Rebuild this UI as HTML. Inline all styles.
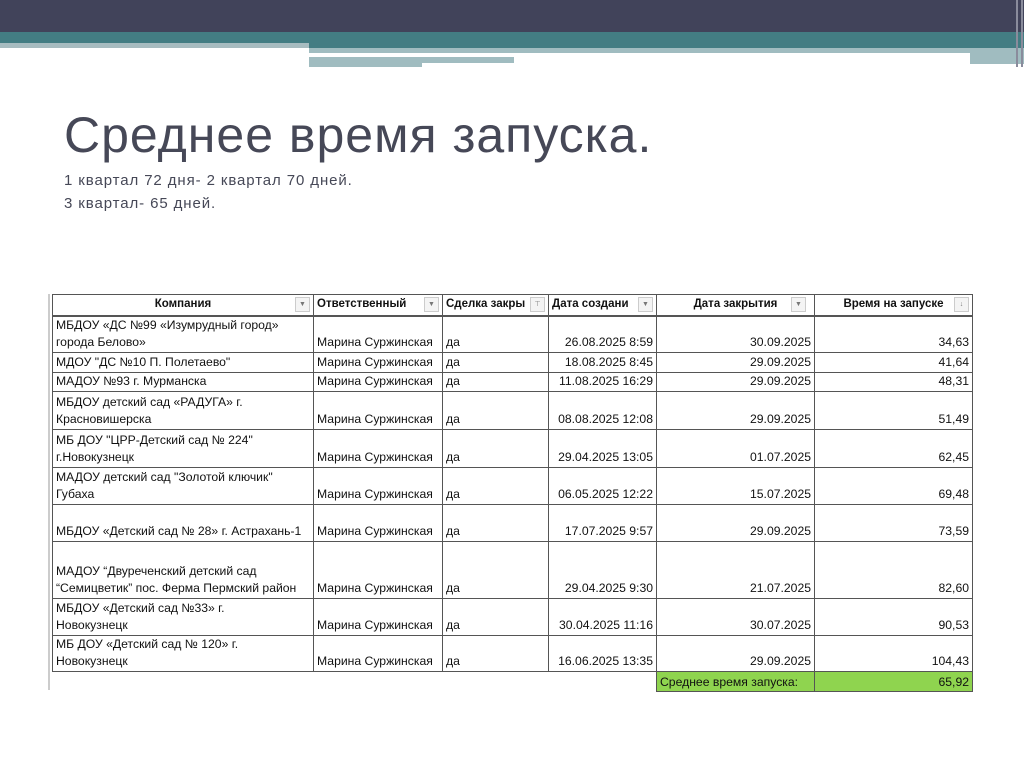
<!DOCTYPE html>
<html><head><meta charset="utf-8"><style>
body{margin:0;width:1024px;height:767px;background:#fff;position:relative;overflow:hidden;font-family:"Liberation Sans","DejaVu Sans",sans-serif}
.b{position:absolute}
h1{position:absolute;left:64px;top:106px;margin:0;font-weight:normal;font-size:50px;color:#464857;letter-spacing:1px}
.sub{position:absolute;left:64px;font-size:15px;color:#464857;letter-spacing:0.9px}
table{position:absolute;left:52px;top:294px;border-collapse:collapse;table-layout:fixed;font-size:12.2px;color:#111}
td{border:1px solid #555;padding:0 3px 1px 3px;vertical-align:bottom;line-height:17px;white-space:nowrap;overflow:hidden;box-sizing:border-box}
tr.h td{font-weight:bold;text-align:center;vertical-align:middle;border-bottom:2px solid #555;font-size:11.5px;position:relative;line-height:15px}
.r{text-align:right}
.dd{position:absolute;right:3px;top:2px;width:13px;height:13px;border:1px solid #ccc;background:#f4f4f4;font-size:7px;color:#777;line-height:13px;text-align:center;font-weight:normal}
.g{background:#8fd44f}
</style></head><body>
<div class="b" style="left:0;top:0;width:1024px;height:32px;background:#41435a"></div>
<div class="b" style="left:0;top:32px;width:1024px;height:11px;background:#437d83"></div>
<div class="b" style="left:309px;top:43px;width:715px;height:5px;background:#437d83"></div>
<div class="b" style="left:0;top:43px;width:309px;height:5px;background:#a7bcc0"></div>
<div class="b" style="left:309px;top:48px;width:715px;height:5px;background:#a0bcc0"></div>
<div class="b" style="left:970px;top:53px;width:54px;height:11px;background:#a0bcc0"></div>
<div class="b" style="left:309px;top:57px;width:113px;height:10px;background:#a0bcc0"></div>
<div class="b" style="left:422px;top:57px;width:92px;height:6px;background:#a0bcc0"></div>
<div class="b" style="left:1016px;top:0;width:2px;height:67px;background:#8a8c9c"></div>
<div class="b" style="left:1021px;top:0;width:2px;height:67px;background:#8a8c9c"></div>
<h1>Среднее время запуска.</h1>
<div class="sub" style="top:172px">1 квартал 72 дня- 2 квартал 70 дней.</div>
<div class="sub" style="top:195px">3 квартал- 65 дней.</div>
<table>
<colgroup><col style="width:261px"><col style="width:129px"><col style="width:106px"><col style="width:108px"><col style="width:158px"><col style="width:158px"></colgroup>
<tr class="h" style="height:21px"><td>Компания<span class="dd">▼</span></td><td style="text-align:left">Ответственный<span class="dd">▼</span></td><td style="text-align:left">Сделка закры<span class="dd">⊤</span></td><td style="text-align:left">Дата создани<span class="dd">▼</span></td><td>Дата закрытия<span class="dd" style="right:8px">▼</span></td><td>Время на запуске<span class="dd">↓</span></td></tr>
<tr style="height:36px"><td>МБДОУ «ДС №99 «Изумрудный город»<br>города Белово»</td><td>Марина Суржинская</td><td>да</td><td class="r">26.08.2025 8:59</td><td class="r">30.09.2025</td><td class="r">34,63</td></tr>
<tr style="height:20px"><td>МДОУ "ДС №10 П. Полетаево"</td><td>Марина Суржинская</td><td>да</td><td class="r">18.08.2025 8:45</td><td class="r">29.09.2025</td><td class="r">41,64</td></tr>
<tr style="height:19px"><td>МАДОУ №93 г. Мурманска</td><td>Марина Суржинская</td><td>да</td><td class="r">11.08.2025 16:29</td><td class="r">29.09.2025</td><td class="r">48,31</td></tr>
<tr style="height:38px"><td>МБДОУ детский сад «РАДУГА» г.<br>Красновишерска</td><td>Марина Суржинская</td><td>да</td><td class="r">08.08.2025 12:08</td><td class="r">29.09.2025</td><td class="r">51,49</td></tr>
<tr style="height:38px"><td>МБ ДОУ "ЦРР-Детский сад № 224"<br>г.Новокузнецк</td><td>Марина Суржинская</td><td>да</td><td class="r">29.04.2025 13:05</td><td class="r">01.07.2025</td><td class="r">62,45</td></tr>
<tr style="height:37px"><td>МАДОУ детский сад "Золотой ключик"<br>Губаха</td><td>Марина Суржинская</td><td>да</td><td class="r">06.05.2025 12:22</td><td class="r">15.07.2025</td><td class="r">69,48</td></tr>
<tr style="height:37px"><td>МБДОУ «Детский сад № 28» г. Астрахань-1</td><td>Марина Суржинская</td><td>да</td><td class="r">17.07.2025 9:57</td><td class="r">29.09.2025</td><td class="r">73,59</td></tr>
<tr style="height:57px"><td>МАДОУ “Двуреченский детский сад<br>“Семицветик” пос. Ферма Пермский район</td><td>Марина Суржинская</td><td>да</td><td class="r">29.04.2025 9:30</td><td class="r">21.07.2025</td><td class="r">82,60</td></tr>
<tr style="height:37px"><td>МБДОУ «Детский сад №33» г.<br>Новокузнецк</td><td>Марина Суржинская</td><td>да</td><td class="r">30.04.2025 11:16</td><td class="r">30.07.2025</td><td class="r">90,53</td></tr>
<tr style="height:36px"><td>МБ ДОУ «Детский сад № 120» г.<br>Новокузнецк</td><td>Марина Суржинская</td><td>да</td><td class="r">16.06.2025 13:35</td><td class="r">29.09.2025</td><td class="r">104,43</td></tr>
<tr style="height:20px"><td style="border:none"></td><td style="border:none"></td><td style="border:none"></td><td style="border:none"></td><td class="g" style="line-height:16px">Среднее время запуска:</td><td class="g r" style="line-height:16px">65,92</td></tr>
</table>
<div class="b" style="left:48px;top:294px;width:2px;height:396px;background:#ccc"></div>
</body></html>
